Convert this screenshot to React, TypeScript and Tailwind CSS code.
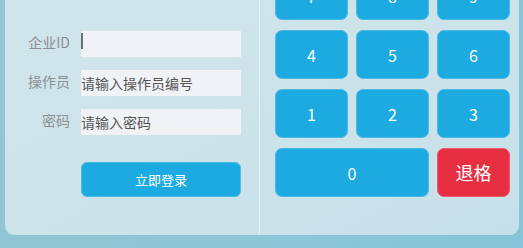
import React from "react"

const font = { fontFamily: '"Noto Sans CJK SC", "Noto Sans", sans-serif' }

function Field({ label, placeholder, caret }: { label: string; placeholder: string; caret?: boolean }) {
  return (
    <div className="flex h-[26px] items-start gap-[11px]">
      <label className="w-[65px] text-right text-[14px] leading-[22px] text-[#8a8f93]">{label}</label>
      <div className="relative h-[26px] w-[160px] bg-[#f0f2f6]">
        <input
          placeholder={placeholder}
          className="h-[22px] w-full bg-transparent p-0 text-[14px] leading-[22px] text-[#555] outline-none placeholder:text-[#555]"
          style={font}
        />
        {caret && <span className="absolute left-0 top-[2px] h-[16px] w-[2px] bg-[#6b6f72]" />}
      </div>
    </div>
  )
}

function Key({ label, wide, danger }: { label: string; wide?: boolean; danger?: boolean }) {
  return (
    <button
      className={
        "flex h-[49px] items-center justify-center rounded-[7px] border text-white " +
        (wide ? "col-span-2 " : "") +
        (danger
          ? "border-[#ee5a68] bg-[#e82e41] text-[18px]"
          : "border-[#4cbbe4] bg-[#1caae0] text-[16px]")
      }
      style={font}
    >
      {label}
    </button>
  )
}

export default function App() {
  const keys = ["7", "8", "9", "4", "5", "6", "1", "2", "3"]
  return (
    <div
      className="flex h-[248px] w-[523px] items-end overflow-hidden bg-gradient-to-r from-[#93c6d4] to-[#86c5d9] pb-[13px] pl-[5px] pr-[4px]"
      style={font}
    >
      <div className="flex w-[514px] rounded-b-[9px] bg-gradient-to-br from-[#d0e4eb] via-[#cde3ea] to-[#c6e0e9]">
        <div className="flex w-[254px] flex-col justify-end pb-[38px]">
          <div className="flex flex-col gap-[13px]">
            <Field label="企业ID" placeholder="" caret />
            <Field label="操作员" placeholder="请输入操作员编号" />
            <Field label="密码" placeholder="请输入密码" />
          </div>
          <button className="ml-[76px] mt-[27px] h-[35px] w-[160px] rounded-[6px] border border-[#4cbbe4] bg-[#1caae0] text-[13px] text-white">
            立即登录
          </button>
        </div>
        <div className="w-px bg-[#e4f0f4]" />
        <div className="grid flex-1 grid-cols-3 gap-x-[8px] gap-y-[10px] pb-[38px] pl-[15px] pr-[9px]">
          {keys.map((k) => (
            <Key key={k} label={k} />
          ))}
          <Key label="0" wide />
          <Key label="退格" danger />
        </div>
      </div>
    </div>
  )
}
